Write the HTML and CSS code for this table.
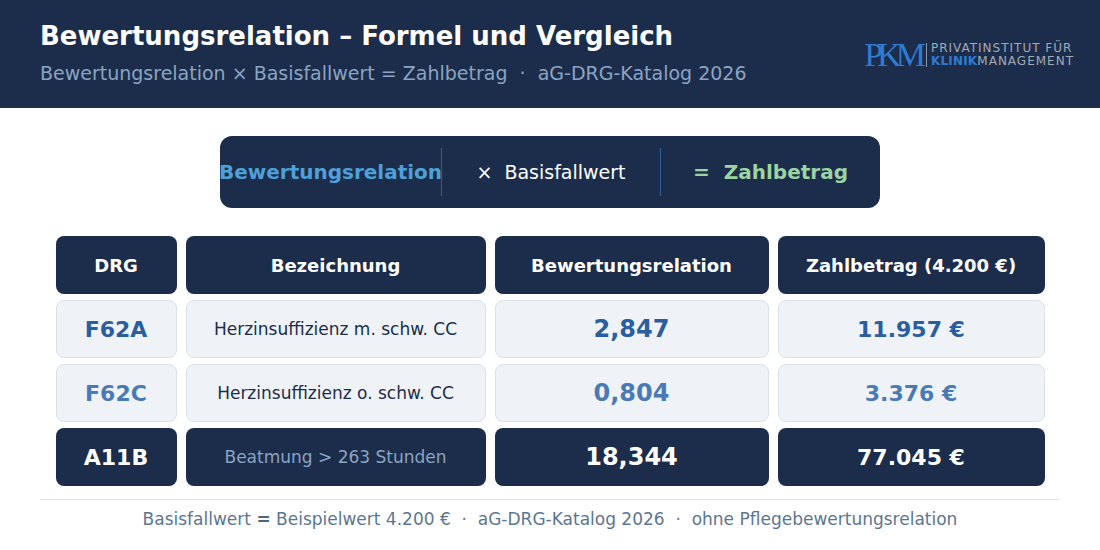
FILE: index.html
```html
<!DOCTYPE html>
<html lang="de">
<head>
<meta charset="utf-8">
<title>Bewertungsrelation – Formel und Vergleich</title>
<link rel="stylesheet" href="styles.css">
</head>
<body>
<header class="top">
  <div class="titles">
    <h1 class="title">Bewertungsrelation – Formel und Vergleich</h1>
    <p class="subtitle">Bewertungsrelation × Basisfallwert = Zahlbetrag &nbsp;·&nbsp; aG-DRG-Katalog 2026</p>
  </div>
  <div class="logo">
    <span class="logo-mark">PKM</span>
    <span class="logo-sep"></span>
    <span class="logo-text">
      <span class="logo-line">PRIVATINSTITUT FÜR</span>
      <span class="logo-line"><span class="logo-blue">KLINIK</span>MANAGEMENT</span>
    </span>
  </div>
</header>

<section class="formula">
  <div class="f-cell"><span class="f-br">Bewertungsrelation</span></div>
  <div class="f-cell f-div"><span class="f-op">×</span><span class="f-base">Basisfallwert</span></div>
  <div class="f-cell f-div"><span class="f-eq">=</span><span class="f-res">Zahlbetrag</span></div>
</section>

<section class="table">
  <div class="cell head">DRG</div>
  <div class="cell head">Bezeichnung</div>
  <div class="cell head">Bewertungsrelation</div>
  <div class="cell head">Zahlbetrag (4.200 €)</div>

  <div class="cell light code strong">F62A</div>
  <div class="cell light desc">Herzinsuffizienz m. schw. CC</div>
  <div class="cell light br strong">2,847</div>
  <div class="cell light amt strong">11.957 €</div>

  <div class="cell light code soft">F62C</div>
  <div class="cell light desc">Herzinsuffizienz o. schw. CC</div>
  <div class="cell light br soft">0,804</div>
  <div class="cell light amt soft">3.376 €</div>

  <div class="cell dark code">A11B</div>
  <div class="cell dark desc">Beatmung &gt; 263 Stunden</div>
  <div class="cell dark br">18,344</div>
  <div class="cell dark amt">77.045 €</div>
</section>

<footer class="foot">
  <p class="foot-text">Basisfallwert <b>=</b> Beispielwert 4.200 € &nbsp;·&nbsp; aG-DRG-Katalog 2026 &nbsp;·&nbsp; ohne Pflegebewertungsrelation</p>
</footer>
</body>
</html>
```

FILE: styles.css
```css
* { box-sizing: border-box; }

html, body {
  margin: 0;
  padding: 0;
  background: #ffffff;
  font-family: "DejaVu Sans", "Liberation Sans", sans-serif;
  width: 1100px;
  height: 550px;
  overflow: hidden;
}

.top {
  height: 108px;
  background: #1b2d4a;
  display: flex;
  align-items: center;
  justify-content: space-between;
  padding: 0 26px 0 40px;
}

.titles {
  display: flex;
  flex-direction: column;
  gap: 9px;
}

.title {
  margin: 0;
  font-size: 26px;
  line-height: 28px;
  font-weight: bold;
  color: #ffffff;
}

.subtitle {
  margin: 0;
  font-size: 19px;
  line-height: 28px;
  color: #8ba4c3;
}

.logo {
  display: flex;
  align-items: center;
  gap: 4px;
  padding-top: 2px;
}

.logo-mark {
  font-family: "Liberation Serif", "DejaVu Serif", serif;
  font-size: 34px;
  line-height: 28px;
  letter-spacing: -6px;
  color: #2f7bd3;
  padding-right: 2px;
}

.logo-sep {
  width: 1px;
  height: 24px;
  background: #8a94a3;
}

.logo-text {
  display: flex;
  flex-direction: column;
}

.logo-line {
  font-size: 12px;
  line-height: 13px;
  letter-spacing: 1px;
  color: #a3aab5;
}

.logo-blue {
  color: #2f7bd3;
  font-weight: bold;
  letter-spacing: 0.2px;
}

.formula {
  width: 660px;
  height: 72px;
  margin: 28px auto 0;
  background: #1b2d4a;
  border-radius: 12px;
  display: grid;
  grid-template-columns: 221px 219px 220px;
  align-items: center;
}

.f-cell {
  height: 48px;
  display: flex;
  align-items: center;
  justify-content: center;
  white-space: nowrap;
}

.f-div {
  border-left: 1px solid #2f5f96;
}

.f-br {
  font-size: 20px;
  font-weight: bold;
  color: #4fa0d8;
}

.f-op {
  font-size: 19px;
  color: #ffffff;
  margin-right: 12px;
}

.f-base {
  font-size: 19px;
  color: #ffffff;
}

.f-eq {
  font-size: 20px;
  font-weight: bold;
  color: #9dd3a1;
  margin-right: 14px;
}

.f-res {
  font-size: 20px;
  font-weight: bold;
  color: #9dd3a1;
}

.table {
  display: grid;
  grid-template-columns: 121px 300px 274px 267px;
  grid-auto-rows: 58px;
  column-gap: 9px;
  row-gap: 6px;
  justify-content: center;
  margin-top: 28px;
}

.cell {
  border-radius: 8px;
  display: flex;
  align-items: center;
  justify-content: center;
  white-space: nowrap;
}

.head {
  background: #1b2d4a;
  color: #ffffff;
  font-size: 18px;
  font-weight: bold;
}

.light {
  background: #eff3f8;
  border: 1.5px solid #d9e0e8;
}

.dark {
  background: #1b2d4a;
  color: #ffffff;
}

.code {
  font-size: 22px;
  font-weight: bold;
}

.br {
  font-size: 24px;
  font-weight: bold;
}

.amt {
  font-size: 22px;
  font-weight: bold;
}

.desc {
  font-size: 17px;
  color: #1b2d4a;
}

.dark.desc {
  color: #8ba4c3;
}

.strong {
  color: #2a5e9f;
}

.soft {
  color: #4a7ab4;
}

.foot {
  margin: 13px 40px 0;
  border-top: 1px solid #e1e5eb;
}

.foot-text {
  margin: 0;
  padding-top: 9px;
  font-size: 17px;
  line-height: 20px;
  text-align: center;
  color: #5b7691;
}

.foot-text b {
  color: #4a6682;
}
```
